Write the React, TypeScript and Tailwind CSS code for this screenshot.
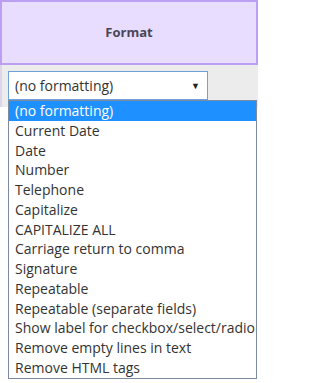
import { useState } from "react";

const OPTIONS = [
  "(no formatting)",
  "Current Date",
  "Date",
  "Number",
  "Telephone",
  "Capitalize",
  "CAPITALIZE ALL",
  "Carriage return to comma",
  "Signature",
  "Repeatable",
  "Repeatable (separate fields)",
  "Show label for checkbox/select/radio",
  "Remove empty lines in text",
  "Remove HTML tags",
];

export default function App() {
  const [selected] = useState(0);

  return (
    <div className="relative h-[383px] w-[258px] bg-white font-['Open_Sans',sans-serif] text-[#333]">
      <div className="flex h-[65px] items-center justify-center border-2 border-[#bb9ff2] bg-[#e8ddff]">
        <span className="text-[13px] font-bold text-[#4a4656]">Format</span>
      </div>
      <div className="h-[42px] border-l-2 border-[#ddd6ea] bg-[#ececec] pl-[6px] pt-[6px]">
        <div className="flex h-[29px] w-[200px] items-center justify-between border border-[#6fa0d6] bg-white pl-[6px] pr-[7px]">
          <span className="text-[14px] leading-none">{OPTIONS[selected]}</span>
          <span className="text-[9px] leading-none text-[#222]">▼</span>
        </div>
      </div>
      <ul className="absolute left-[8px] top-[100px] w-[249px] border border-[#7d8aa0] bg-white py-0">
        {OPTIONS.map((opt, i) => (
          <li
            key={opt}
            className={`h-[19.75px] whitespace-nowrap pl-[6px] text-[14px] leading-[19.75px] ${
              i === selected ? "bg-[#1e90ff] text-white" : ""
            }`}
          >
            {opt}
          </li>
        ))}
      </ul>
    </div>
  );
}
